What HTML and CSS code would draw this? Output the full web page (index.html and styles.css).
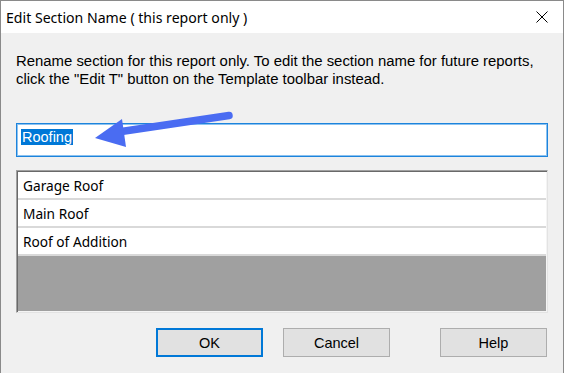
FILE: index.html
```html
<!DOCTYPE html>
<html lang="en">
<head>
    <meta charset="UTF-8">
    <title>Edit Section Name</title>
    <link rel="stylesheet" href="styles.css">
</head>
<body>
    <div class="window">
        <div class="titlebar">
            <span class="title">Edit Section Name ( this report only )</span>
            <svg class="close" width="12" height="12" viewBox="0 0 12 12">
                <path d="M0.5 0.5 L11.5 11.5 M11.5 0.5 L0.5 11.5" stroke="#000" stroke-width="1" fill="none"/>
            </svg>
        </div>
        <div class="content">
            <p class="hint">Rename section for this report only. To edit the section name for future reports,<br>click the "Edit T" button on the Template toolbar instead.</p>
            <div class="name-field"><span class="selected">Roofing</span></div>
            <div class="section-list">
                <div class="row">Garage Roof</div>
                <div class="row">Main Roof</div>
                <div class="row">Roof of Addition</div>
                <div class="empty"></div>
            </div>
            <div class="buttons">
                <button class="btn btn-default">OK</button>
                <button class="btn">Cancel</button>
                <button class="btn btn-help">Help</button>
            </div>
        </div>
        <svg class="arrow" width="564" height="373" viewBox="0 0 564 373">
            <line x1="229" y1="115.5" x2="118" y2="132" stroke="#4a6cf2" stroke-width="7.5" stroke-linecap="round"/>
            <polygon points="95,138 122,119 126,147" fill="#4a6cf2"/>
        </svg>
    </div>
</body>
</html>
```

FILE: styles.css
```css
* {
    padding: 0;
    margin: 0;
    box-sizing: border-box;
}
body {
    background-color: #f0f0f0;
    font-family: "Liberation Sans", Arial, sans-serif;
}
.window {
    position: relative;
    width: 564px;
    height: 373px;
    border: 1px solid #8a8a8a;
    border-bottom: none;
    background-color: #f0f0f0;
}
.titlebar {
    display: flex;
    align-items: center;
    justify-content: space-between;
    height: 32px;
    padding: 0 15px 0 5px;
    background-color: #fff;
}
.titlebar .title {
    font-family: "Noto Sans", sans-serif;
    font-size: 14.1px;
    color: #000;
}
.close {
    display: block;
}
.content {
    padding: 0 15px;
}
.hint {
    margin-top: 19px;
    font-size: 14.9px;
    line-height: 18px;
    color: #000;
    white-space: nowrap;
}
.name-field {
    margin-top: 35px;
    height: 34px;
    padding: 4px 4px;
    background-color: #fff;
    border: 1px solid #1d84dc;
    box-shadow: inset 0 0 0 1px #8cc2f0;
}
.name-field .selected {
    display: inline-block;
    height: 16px;
    line-height: 16px;
    padding: 0 1px;
    font-size: 14.5px;
    color: #fff;
    background-color: #0078d7;
}
.section-list {
    display: flex;
    flex-direction: column;
    margin-top: 13px;
    height: 143px;
    border-top: 1px solid #a0a0a0;
    border-left: 1px solid #a0a0a0;
    border-right: 1px solid #e3e3e3;
    border-bottom: 1px solid #e3e3e3;
    box-shadow: inset 1px 1px 0 #696969, inset -1px -1px 0 #f4f4f4;
    padding: 1px 1px 1px 1px;
}
.section-list .row {
    height: 28px;
    padding: 5px 0 0 5px;
    background-color: #fff;
    border-bottom: 2px solid #d9d9d9;
    font-family: "Noto Sans", sans-serif;
    font-size: 13.7px;
    line-height: 18px;
    color: #000;
}
.section-list .empty {
    flex-grow: 1;
    background-color: #a0a0a0;
}
.buttons {
    display: flex;
    justify-content: flex-end;
    margin-top: 15px;
    padding-right: 1px;
}
.btn {
    width: 107px;
    height: 29px;
    margin-left: 20px;
    background-color: #e1e1e1;
    border: 1px solid #adadad;
    font-family: "Liberation Sans", Arial, sans-serif;
    font-size: 14.5px;
    color: #000;
}
.btn-default {
    border: 2px solid #0078d7;
}
.btn-help {
    margin-left: 50px;
}
.arrow {
    position: absolute;
    left: -1px;
    top: -1px;
    pointer-events: none;
}
```
